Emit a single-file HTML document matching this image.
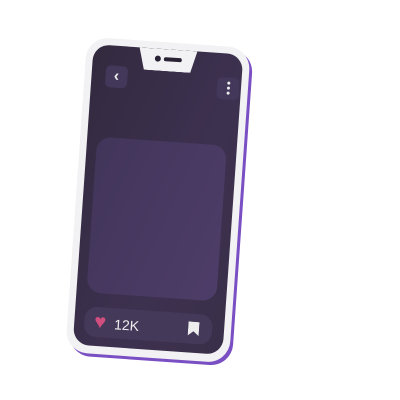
<!DOCTYPE html>
<html><head><style>
body{margin:0;width:400px;height:400px;background:#fff;overflow:hidden;position:relative;font-family:"Liberation Sans",sans-serif}
.ph{position:absolute;left:76px;top:42px;width:164px;height:316px;transform:rotate(4deg);transform-origin:center}
.sh{position:absolute;left:3px;top:3px;width:164px;height:316px;border-radius:22px;background:#7a4fc4}
.body{position:absolute;left:0;top:0;width:164px;height:316px;border-radius:22px;background:#f2f1f3}
.scr{position:absolute;left:7px;top:7px;right:7px;bottom:8px;border-radius:16px;background:linear-gradient(110deg,#332a3f,#3d3150 60%,#3a2f49)}
.notch{position:absolute;left:46px;top:0;width:58px;height:22px;background:#f2f1f3;clip-path:polygon(0 0,100% 0,90% 100%,10% 100%);border-radius:0 0 8px 8px}
.btn{position:absolute;width:22px;height:22px;border-radius:5px;background:#43385a;color:#eee;font-size:16px;font-weight:bold;text-align:center;line-height:21px}
.card{position:absolute;left:10px;top:92px;width:130px;height:156px;border-radius:14px;background:linear-gradient(110deg,#42355a,#4d3d68)}
.bar{position:absolute;left:10px;top:262px;width:128px;height:30px;border-radius:12px;background:#45395a;color:#eee;font-size:14px}
</style></head><body>
<div class="ph">
<div class="sh"></div>
<div class="body">
<div class="scr">
<div class="notch"><div style="position:absolute;left:16px;top:7px;width:6px;height:6px;border-radius:50%;background:#2a2235"></div><div style="position:absolute;left:25px;top:8px;width:18px;height:4px;border-radius:2px;background:#2a2235"></div></div>
<div class="btn" style="left:14px;top:20px">‹</div>
<div class="btn" style="left:126px;top:24px;font-size:0"><span style="position:absolute;left:9.5px;top:4px;width:3px;height:3px;border-radius:50%;background:#eee;box-shadow:0 5px 0 #eee,0 10px 0 #eee"></span></div>
<div class="card"></div>
<div class="bar">
<span style="position:absolute;left:10px;top:5px;color:#d14f7f;font-size:20px;line-height:20px">♥</span>
<span style="position:absolute;left:30px;top:8px">12K</span>
<svg style="position:absolute;left:104px;top:8px" width="11" height="14"><path d="M0 0H11V14L5.5 9.5L0 14Z" fill="#eee"/></svg>
</div>
</div>
</div>
</div>
</body></html>
